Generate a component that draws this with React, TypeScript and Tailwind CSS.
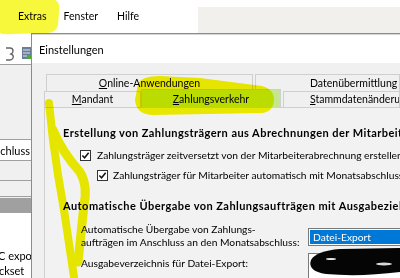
import type { ReactNode } from "react";

function Check({ className }: { className: string }) {
  return (
    <span className={`flex h-[11px] w-[11px] shrink-0 items-center justify-center border border-[#333] bg-white ${className}`}>
      <svg viewBox="0 0 10 10" className="h-[9px] w-[9px]">
        <path d="M1.5 5 L4 7.5 L8.5 2" fill="none" stroke="#111" strokeWidth="1.7" />
      </svg>
    </span>
  );
}

function Tab({ children, className }: { children: ReactNode; className: string }) {
  return (
    <div className={`flex items-center overflow-hidden whitespace-nowrap border border-b-0 border-[#cfcfcf] ${className}`}>
      {children}
    </div>
  );
}

function SideStrip() {
  return (
    <div className="flex w-[31px] shrink-0 flex-col overflow-hidden">
      <div className="relative h-[32px] shrink-0 border-b border-[#a0a0a0] bg-white">
        <svg width="31" height="31" className="absolute left-0 top-0">
          <path d="M6 15 h4 q3 0 3 3 q0 2 -2 3 q3 1 2 4 q-1 2 -3 2 h-4" fill="none" stroke="#666" strokeWidth="1.4" />
          <rect x="22" y="14" width="9" height="12" fill="#6a7d98" />
          <path d="M23 17 h7 M23 20 h7 M23 23 h5" stroke="#dfe6ee" strokeWidth="1" />
          <rect x="27" y="22" width="4" height="4" fill="#4caf2e" />
        </svg>
      </div>
      <div className="h-[75px] shrink-0 border-b border-[#a0a0a0] bg-[#f0f0f0]" />
      <div className="flex h-[21px] shrink-0 items-center justify-end border-b border-[#a0a0a0] bg-white pr-px">
        <span className="whitespace-nowrap">abschluss</span>
      </div>
      <div className="h-[20px] shrink-0 border-b border-[#a0a0a0] bg-[#f0f0f0]" />
      <div className="h-[16px] shrink-0 border-b border-[#a0a0a0] bg-[#f0f0f0]" />
      <div className="h-px shrink-0 bg-[#f0f0f0]" />
      <div className="h-[15px] shrink-0 bg-[#a0a0a0]" />
      <div className="flex-1 bg-white pt-[35px] leading-[15px]">
        <div className="-ml-[2px] whitespace-nowrap">C export</div>
        <div className="-ml-[1px] whitespace-nowrap">ckset</div>
      </div>
    </div>
  );
}

function Dialog() {
  return (
    <div className="flex min-w-0 flex-1 flex-col border-l border-t border-[#8c8c8c]">
      <div className="h-px shrink-0 bg-[#d6d6d6]" />
      <div className="flex h-[28px] shrink-0 items-center bg-white pl-[7px] text-[11px]">Einstellungen</div>
      <div className="flex min-h-0 flex-1 flex-col overflow-hidden bg-[#f0f0f0] pl-[12px] pt-[11px] text-[10.5px]">
        <div className="flex h-[17px] shrink-0 gap-[2px] pl-[2px]">
          <Tab className="w-[207px] justify-center bg-[#f0f0f0]">
            <span>
              <u className="underline-offset-1">O</u>nline-Anwendungen
            </span>
          </Tab>
          <Tab className="flex-1 bg-[#f0f0f0] pl-[54px]">Datenübermittlung / Lohnsteuer</Tab>
        </div>
        <div className="flex h-[16px] shrink-0 items-end">
          <Tab className="h-[16px] w-[97px] justify-center bg-[#f0f0f0]">
            <span>
              <u className="underline-offset-1">M</u>andant
            </span>
          </Tab>
          <Tab className="relative z-10 -mb-px h-[19px] w-[140px] justify-center bg-[#c3e68e]">
            <span>
              <u className="underline-offset-1">Z</u>ahlungsverkehr
            </span>
          </Tab>
          <Tab className="ml-[2px] h-[16px] flex-1 bg-[#f0f0f0] pl-[26px]">
            <span>
              <u className="underline-offset-1">S</u>tammdatenänderungen
            </span>
          </Tab>
        </div>
        <div className="flex min-h-0 flex-1 flex-col overflow-hidden border-l border-t border-[#cfcfcf] bg-[#f2f2f2] pt-[18px] text-[10.25px] leading-[14px]">
          <div className="shrink-0 whitespace-nowrap pl-[18px] text-[11px] font-bold tracking-[0.45px]">
            Erstellung von Zahlungsträgern aus Abrechnungen der Mitarbeiter
          </div>
          <div className="mt-[8px] flex h-[14px] shrink-0 items-center gap-[6px] whitespace-nowrap pl-[35px]">
            <Check className="" />
            <span>Zahlungsträger zeitversetzt von der Mitarbeiterabrechnung erstellen</span>
          </div>
          <div className="mt-[6px] flex h-[14px] shrink-0 items-center gap-[5px] whitespace-nowrap pl-[52px]">
            <Check className="" />
            <span>Zahlungsträger für Mitarbeiter automatisch mit Monatsabschluss</span>
          </div>
          <div className="mt-[17px] shrink-0 whitespace-nowrap pl-[18px] text-[11px] font-bold tracking-[0.45px]">
            Automatische Übergabe von Zahlungsaufträgen mit Ausgabeziel
          </div>
          <div className="mt-[10px] flex shrink-0 items-start pl-[36px]">
            <div className="w-[227px] shrink-0 whitespace-nowrap leading-[13px]">
              Automatische Übergabe von Zahlungs-
              <br />
              aufträgen im Anschluss an den Monatsabschluss:
            </div>
            <div className="mt-[5px] h-[18px] w-[120px] shrink-0 border border-[#7a7a7a] bg-white p-px">
              <div className="flex h-full items-center bg-[#0078d7] pl-[3px] text-white">Datei-Export</div>
            </div>
          </div>
          <div className="mt-[4px] flex shrink-0 items-start pl-[36px]">
            <div className="mt-[4px] w-[227px] shrink-0 whitespace-nowrap leading-[13px]">Ausgabeverzeichnis für Datei-Export:</div>
            <div className="h-[30px] w-[120px] shrink-0 border border-[#7a7a7a] bg-white" />
          </div>
        </div>
      </div>
    </div>
  );
}

function Marks() {
  return (
    <>
      <svg width="400" height="278" className="pointer-events-none absolute left-0 top-0 z-20 mix-blend-multiply">
        <path d="M0 0 H55 Q60 1 59 12 L58 25 Q56 33 47 33 L12 34 Q3 35 0 33 Z" fill="#f7f73c" />
        <path
          d="M138 84 Q141 76 160 76 L200 78 L262 86 Q274 89 274 100 Q273 112 262 113 L152 115 Q136 114 135 100 Z"
          fill="#f4f400"
        />
        <path d="M49 103 L53 140 L58 175 L64 210 L74 277" fill="none" stroke="#f2f200" strokeWidth="8" strokeLinecap="round" />
        <path d="M53 130 Q62 152 80 172 Q88 186 84 205 L78 262" fill="none" stroke="#f2f200" strokeWidth="9" strokeLinecap="round" />
      </svg>
      <svg width="400" height="278" className="pointer-events-none absolute left-0 top-0 z-20">
        <path d="M311 260 Q316 251 340 249 L400 248 L400 272 Q360 277 326 274 Q307 271 311 260 Z" fill="#050505" />
        <ellipse cx="331" cy="259" rx="5" ry="1" fill="#e8e8e8" />
        <ellipse cx="384" cy="264" rx="8" ry="1.5" fill="#d8d8d8" />
      </svg>
    </>
  );
}

export default function App() {
  return (
    <div className="relative h-[278px] w-[400px] overflow-hidden bg-white font-['Lato',sans-serif] text-[11px] leading-none text-black">
      <div className="flex h-[33px]">
        <div className="flex w-[198px] shrink-0 items-center gap-[17px] pl-[18px] text-[10.5px]">
          <span>Extras</span>
          <span>Fenster</span>
          <span className="ml-[2px]">Hilfe</span>
        </div>
        <div className="mt-[7px] flex-1 bg-[#f1f0ec]" />
      </div>
      <div className="flex h-[245px]">
        <SideStrip />
        <Dialog />
      </div>
      <Marks />
    </div>
  );
}
